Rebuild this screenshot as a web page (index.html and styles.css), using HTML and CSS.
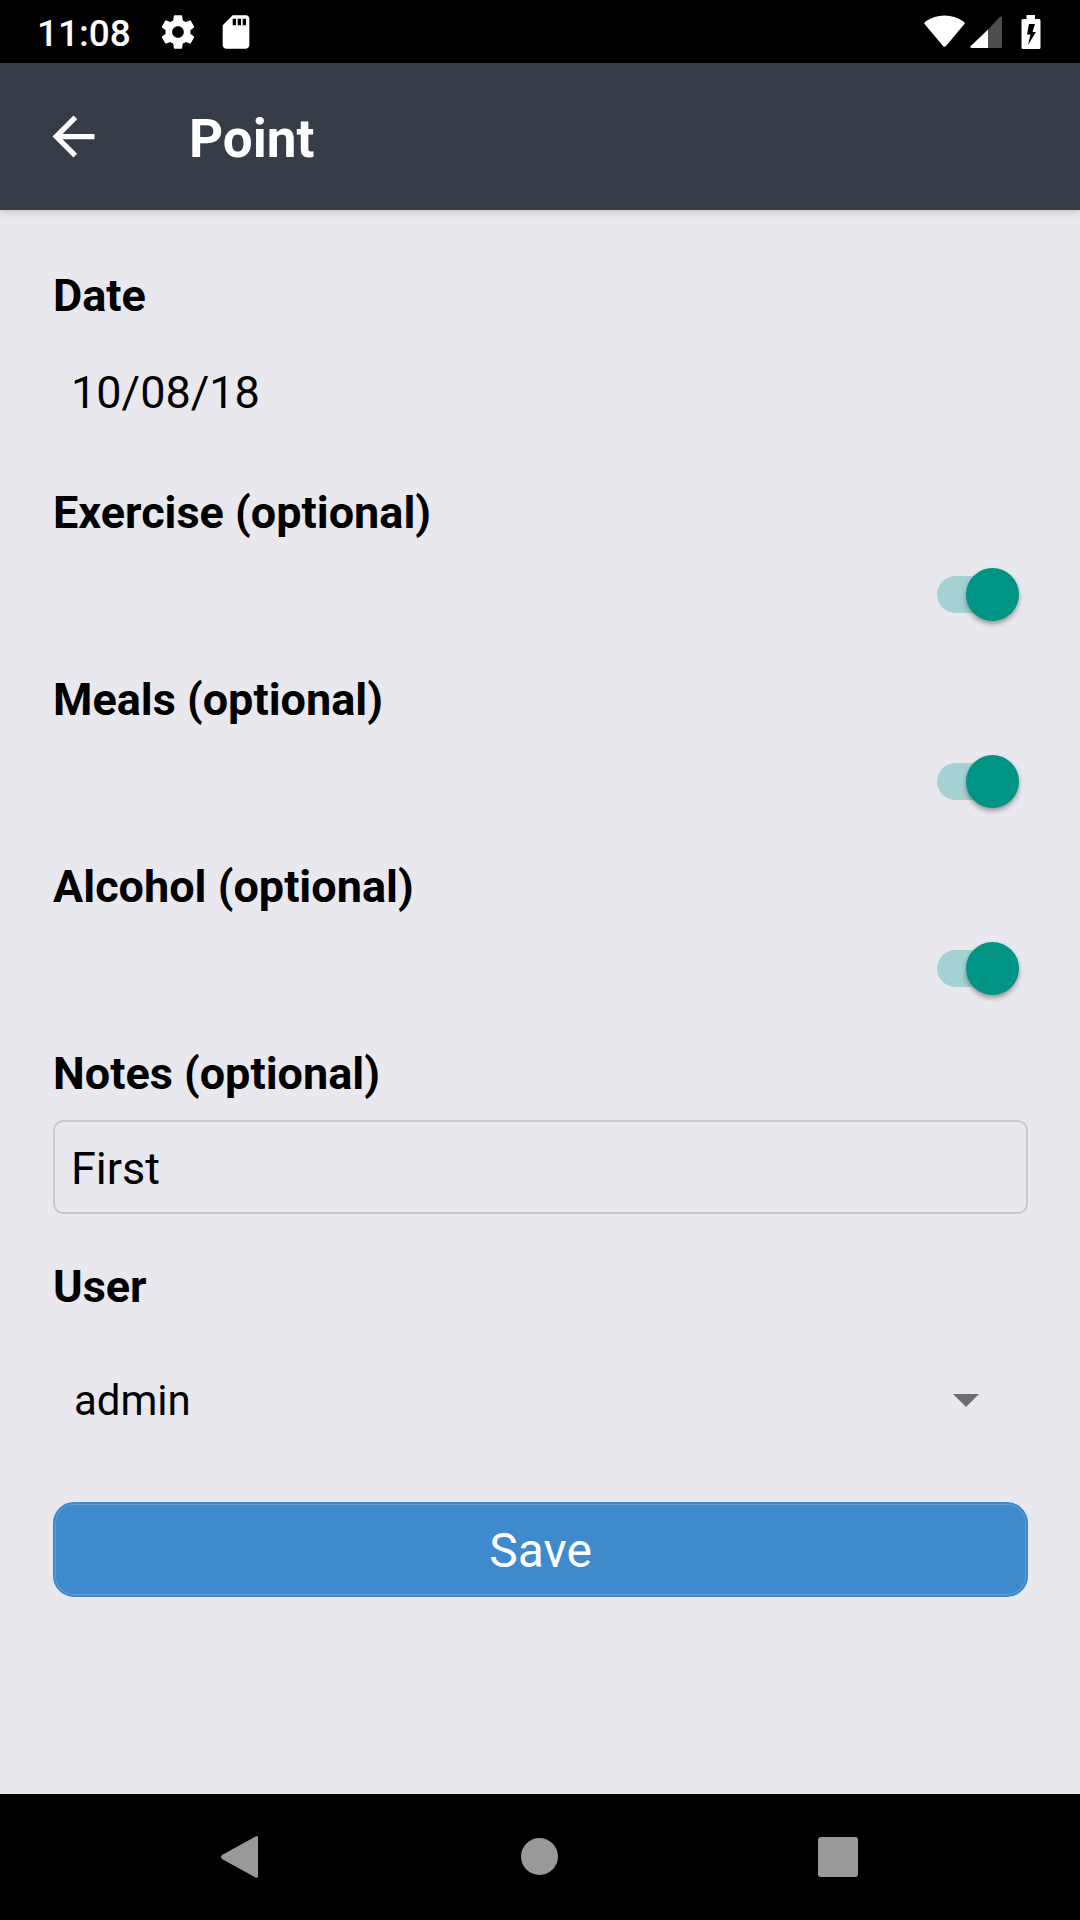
FILE: index.html
```html
<!DOCTYPE html>
<html lang="en">
<head>
<meta charset="utf-8">
<meta name="viewport" content="width=device-width, initial-scale=1">
<title>Point</title>
<link rel="stylesheet" href="styles.css">
</head>
<body>
<div class="status-bar">
  <span class="clock">11:08</span>
  <svg class="status-icon" viewBox="0 0 24 24" aria-hidden="true"><path d="M19.43 12.98c.04-.32.07-.64.07-.98s-.03-.66-.07-.98l2.11-1.65c.19-.15.24-.42.12-.64l-2-3.46c-.12-.22-.39-.3-.61-.22l-2.49 1c-.52-.4-1.08-.73-1.69-.98l-.38-2.65C14.46 2.18 14.25 2 14 2h-4c-.25 0-.46.18-.49.42l-.38 2.65c-.61.25-1.17.59-1.69.98l-2.49-1c-.23-.09-.49 0-.61.22l-2 3.46c-.13.22-.07.49.12.64l2.11 1.65c-.04.32-.07.65-.07.98s.03.66.07.98l-2.11 1.65c-.19.15-.24.42-.12.64l2 3.46c.12.22.39.3.61.22l2.49-1c.52.4 1.08.73 1.69.98l.38 2.65c.03.24.24.42.49.42h4c.25 0 .46-.18.49-.42l.38-2.65c.61-.25 1.17-.59 1.69-.98l2.49 1c.23.09.49 0 .61-.22l2-3.46c.12-.22.07-.49-.12-.64l-2.11-1.65zM12 15.5c-1.93 0-3.5-1.57-3.5-3.5s1.57-3.5 3.5-3.5 3.5 1.57 3.5 3.5-1.57 3.500-3.500 3.500z"/></svg>
  <svg class="status-icon" viewBox="0 0 24 24" aria-hidden="true"><path d="M18 2h-8L4.020 8 4 20c0 1.100.9 2 2 2h12c1.100 0 2-.9 2-2V4c0-1.100-.9-2-2-2zm-6 6h-2V4h2v4zm3 0h-2V4h2v4zm3 0h-2V4h2v4z"/></svg>
  <div class="system-icons">
    <svg width="41" height="33" viewBox="0 0 41 33" aria-hidden="true"><path d="M1 9.500Q-.5 8 1.200 6.800Q10 .5 20.500 .5T39.800 6.800Q41.500 8 40 9.500L22 31Q20.500 32.500 19 31Z"/></svg>
    <svg width="32" height="32" viewBox="0 0 32 32" aria-hidden="true"><path d="M18 13.500V32H1.500Q-.5 31.500.8 30Z"/><path class="dim" d="M18 13.500L30 .8Q31.500-.2 32 1.500V30.500Q32 32 30.500 32H18Z"/></svg>
    <svg class="battery" width="20" height="34" viewBox="0 0 20 34" aria-hidden="true"><path fill-rule="evenodd" d="M5.500 0H14V4H18Q19.500 4 19.500 5.500V32.500Q19.500 34 18 34H2Q.5 34 .5 32.500V5.500Q.5 4 2 4H5.500ZM8 9L6 19.500H9.500L7 30L15 17H11.500L14 9Z"/></svg>
  </div>
</div>
<header class="app-bar">
  <button class="back" type="button" aria-label="Back"><svg width="63" height="63" viewBox="0 0 24 24" aria-hidden="true"><path d="M20 11H7.830l5.590-5.590L12 4l-8 8 8 8 1.410-1.410L7.830 13H20v-2z"/></svg></button>
  <h1>Point</h1>
</header>
<main>
  <form class="form">
    <div class="field">
      <label for="date">Date</label>
      <input class="date" id="date" type="text" value="10/08/18">
    </div>
    <div class="field">
      <label for="exercise">Exercise (optional)</label>
      <div class="switch-row"><input class="switch" id="exercise" type="checkbox" role="switch" checked></div>
    </div>
    <div class="field">
      <label for="meals">Meals (optional)</label>
      <div class="switch-row"><input class="switch" id="meals" type="checkbox" role="switch" checked></div>
    </div>
    <div class="field">
      <label for="alcohol">Alcohol (optional)</label>
      <div class="switch-row"><input class="switch" id="alcohol" type="checkbox" role="switch" checked></div>
    </div>
    <div class="field">
      <label for="notes">Notes (optional)</label>
      <input class="notes" id="notes" type="text" value="First">
    </div>
    <div class="field">
      <label for="user">User</label>
      <div class="picker">
        <select id="user"><option>admin</option></select>
        <svg width="26" height="13" viewBox="0 0 26 13" aria-hidden="true"><path d="M0 0H26L13 13Z"/></svg>
      </div>
    </div>
    <button class="save" type="submit">Save</button>
  </form>
</main>
<nav class="nav-bar">
  <button type="button" aria-label="Back"><svg width="42" height="42" viewBox="0 0 42 42" aria-hidden="true"><path d="M35.500.5Q38 -.8 38 2V40Q38 42.800 35.500 41.500L2 23Q0 21 2 19Z"/></svg></button>
  <button type="button" aria-label="Home"><svg width="38" height="38" viewBox="0 0 38 38" aria-hidden="true"><circle cx="18.500" cy="18.500" r="18.500"/></svg></button>
  <button type="button" aria-label="Recent apps"><svg width="42" height="40" viewBox="0 0 42 40" aria-hidden="true"><rect width="40" height="40" rx="3"/></svg></button>
</nav>
</body>
</html>
```
FILE: styles.css
```css
* {
  box-sizing: border-box;
}

body {
  margin: 0;
  min-height: 100vh;
  display: flex;
  flex-direction: column;
  background: #e9e8ee;
  color: #000;
  font-family: Roboto, sans-serif;
}

svg {
  display: block;
  fill: currentColor;
}

button,
input,
select {
  margin: 0;
  border: 0;
  padding: 0;
  background: transparent;
  color: inherit;
  font: inherit;
}

.status-bar {
  display: flex;
  align-items: center;
  gap: 18px;
  height: 63px;
  padding: 0 39px 0 37px;
  background: #000;
  color: #fff;
}

.clock {
  margin-right: 9px;
  padding-top: 4px;
  font-size: 37px;
  font-weight: 500;
}

.status-icon {
  width: 40px;
  height: 40px;
}

.system-icons {
  display: flex;
  align-items: center;
  gap: 5px;
  margin-left: auto;
}

.battery {
  margin-left: 14px;
}

.dim {
  opacity: 0.3;
}

.app-bar {
  display: flex;
  align-items: center;
  gap: 84px;
  height: 147px;
  padding: 0 42px;
  background: #363d47;
  color: #fff;
  box-shadow: 0 1px 8px rgba(0, 0, 0, 0.2);
}

.app-bar h1 {
  margin: 0;
  padding-top: 4px;
  font-size: 53px;
  font-weight: 700;
}

main {
  flex: 1;
  padding: 59px 52px 59px 53px;
}

.form {
  display: flex;
  flex-direction: column;
}

.field {
  display: flex;
  flex-direction: column;
  gap: 20px;
  margin-bottom: 46px;
}

.field label {
  font-size: 45px;
  font-weight: 700;
  line-height: 53px;
}

.date,
.notes {
  width: 100%;
  padding: 2px 16px 0;
  font-size: 45px;
}

.date {
  height: 98px;
  padding: 2px 18px 0;
}

.notes {
  height: 94px;
  border: 2px solid #c9c9c9;
  border-radius: 10px;
}

.switch-row {
  display: flex;
  align-items: center;
  justify-content: flex-end;
  height: 68px;
  padding: 2px 9px 0 0;
}

.switch {
  appearance: none;
  display: flex;
  align-items: center;
  justify-content: flex-end;
  width: 82px;
  height: 37px;
  border-radius: 19px;
  background: #a4d1d1;
}

.switch::before {
  content: "";
  flex: none;
  width: 53px;
  height: 53px;
  border-radius: 50%;
  background: #009485;
  box-shadow: 0 3px 5px rgba(0, 0, 0, 0.35);
}

.switch:not(:checked) {
  justify-content: flex-start;
}

.picker {
  display: grid;
  align-items: center;
  height: 134px;
  margin-bottom: -11px;
}

.picker select,
.picker svg {
  grid-area: 1 / 1;
}

.picker select {
  appearance: none;
  height: 100%;
  padding: 0 21px;
  font-size: 42px;
}

.picker svg {
  justify-self: end;
  margin-right: 49px;
  color: #6d6d6e;
  pointer-events: none;
}

.save {
  height: 95px;
  border: 2px solid #3f8acd;
  border-radius: 21px;
  padding-top: 2px;
  background: #3f8acd;
  box-shadow: inset 0 0 0 1px #689fd6;
  color: #fff;
  font-size: 48px;
}

.nav-bar {
  display: flex;
  align-items: center;
  justify-content: center;
  height: 126px;
  background: #000;
  color: #999;
}

.nav-bar button {
  display: flex;
  align-items: center;
  justify-content: center;
  width: 299px;
  height: 100%;
}
```
